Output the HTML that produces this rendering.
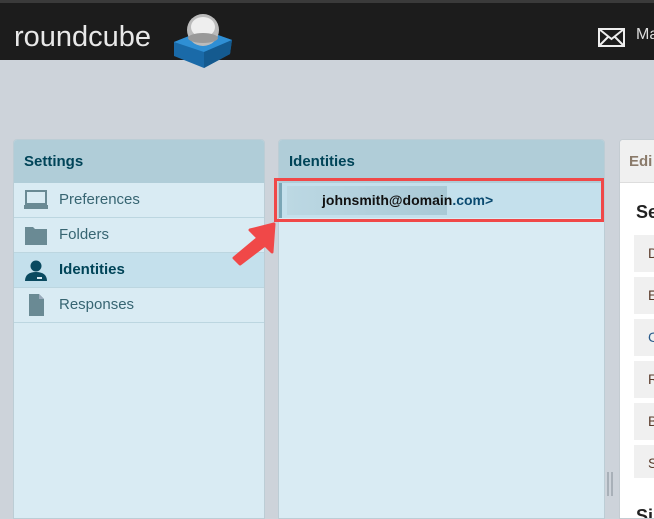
<!DOCTYPE html>
<html><head><meta charset="utf-8"><style>
*{margin:0;padding:0;box-sizing:border-box}
body{width:654px;height:513px;overflow:hidden;background:#cdd3da;font-family:"Liberation Sans","DejaVu Sans",sans-serif;position:relative}
.top{position:absolute;left:0;top:0;width:654px;height:60px;background:#1c1c1c;border-top:3px solid #3a3a3a}
.logo{position:absolute;left:14px;top:18px;color:#e8e8e8;font-size:29px;letter-spacing:0px;font-family:"Liberation Sans",sans-serif}
.mail{position:absolute;left:636px;top:23px;color:#ddd;font-size:16px}
.panel{position:absolute;top:139px;height:380px;border-radius:4px 4px 0 0;overflow:hidden;background:#d9ebf3;border:1px solid #bccdd5}
.hdr{height:43px;background:#b0cdd8;color:#004458;font-weight:bold;font-size:15px;padding:13px 10px}
.item{height:35px;border-bottom:1px solid #bcd6e0;font-size:15px;color:#376572;padding:8px 0 0 45px;position:relative}
.item.sel{background:#c4e0ec;color:#004458;font-weight:bold}
.ic{position:absolute;left:10px;top:6px;width:24px;height:22px}
.btn{position:absolute;left:634px;width:30px;height:37px;background:#f0f0f0;color:#5a3a2a;font-size:14px;padding:10px 0 0 14px}
</style></head><body>
<div class="top">
<div class="logo">roundcube</div>
<svg style="position:absolute;left:170px;top:5px" width="66" height="60" viewBox="0 0 66 60">
<polygon points="4,34 34,22 62,32 60,46 34,60 4,48" fill="#1a6aa8"/>
<polygon points="4,34 34,22 62,32 34,44" fill="#2f8fd4"/>
<polygon points="34,44 62,32 60,46 34,60" fill="#145a8f"/>
<ellipse cx="33" cy="22" rx="16" ry="16" fill="#bbb"/>
<ellipse cx="33" cy="19" rx="12" ry="10" fill="#eee"/>
<ellipse cx="33" cy="30" rx="15" ry="5" fill="#999"/>
</svg>
<svg style="position:absolute;left:598px;top:25px" width="27" height="19" viewBox="0 0 27 19"><rect x="1" y="1" width="25" height="17" fill="none" stroke="#eee" stroke-width="2"/><path d="M1 1L13.5 11L26 1M1 18L10 9M26 18L17 9" fill="none" stroke="#eee" stroke-width="2"/></svg>
<div class="mail">Ma</div>
</div>

<div class="panel" style="left:13px;width:252px">
<div class="hdr">Settings</div>
<div class="item"><svg class="ic" viewBox="0 0 24 22"><rect x="2" y="2" width="20" height="13" fill="none" stroke="#6a8a94" stroke-width="2"/><rect x="0" y="16" width="24" height="4" fill="#6a8a94"/></svg>Preferences</div>
<div class="item"><svg class="ic" viewBox="0 0 24 22"><path d="M1 3h8l2 2h12v16H1z" fill="#6a8a94"/></svg>Folders</div>
<div class="item sel"><svg class="ic" viewBox="0 0 24 22"><circle cx="12" cy="7" r="5.5" fill="#0a4a60"/><path d="M1 22c0-6 4-9 11-9s11 3 11 9z" fill="#0a4a60"/><rect x="13" y="18" width="5" height="2" fill="#d9ebf3"/></svg>Identities</div>
<div class="item"><svg class="ic" viewBox="0 0 24 22"><path d="M5 0h10l5 5v17H5z" fill="#6a8a94"/><path d="M15 0v5h5" fill="#9ab"/></svg>Responses</div>
</div>

<div class="panel" style="left:278px;width:327px">
<div class="hdr">Identities</div>
<div style="height:35px;background:#c4e0ec;border-left:3px solid #7aa6b6;position:relative">
<div style="position:absolute;left:5px;top:3px;width:160px;height:29px;background:linear-gradient(90deg,#bcd8e3,#a9c9d6)"></div>
<div style="position:absolute;left:40px;top:9px;font-size:14px;font-weight:bold;color:#111">johnsmith@domain<span style="color:#0a4a70">.com&gt;</span></div>
</div>
</div>
<div style="position:absolute;left:274px;top:178px;width:330px;height:44px;border:3px solid #f04848"></div>

<svg style="position:absolute;left:228px;top:222px" width="50" height="46" viewBox="0 0 50 46"><path d="M46 2L44 30L37 23L12 42L6 36L30 16L22 8Z" fill="#f04848" stroke="#f04848" stroke-width="3" stroke-linejoin="round"/></svg>

<div style="position:absolute;left:619px;top:139px;width:40px;height:380px;background:#fff;border:1px solid #c4ccd2;border-radius:4px 0 0 0;overflow:hidden">
<div style="height:43px;background:#f0f0f0;border-bottom:1px solid #ddd;color:#8a7a6a;font-weight:bold;font-size:15px;padding:13px 9px">Edi</div>
<div style="position:absolute;left:16px;top:62px;font-weight:bold;font-size:18px;color:#222">Se</div>
<div style="position:absolute;left:16px;top:366px;font-weight:bold;font-size:18px;color:#222">Si</div>
</div>
<div class="btn" style="top:235px">D</div>
<div class="btn" style="top:277px">E</div>
<div class="btn" style="top:319px;color:#2a5a8a">C</div>
<div class="btn" style="top:361px">R</div>
<div class="btn" style="top:403px">B</div>
<div class="btn" style="top:445px;height:33px">S</div>
<div style="position:absolute;left:607px;top:472px;width:2px;height:24px;background:#a8b0b8"></div>
<div style="position:absolute;left:611px;top:472px;width:2px;height:24px;background:#a8b0b8"></div>
</body></html>
